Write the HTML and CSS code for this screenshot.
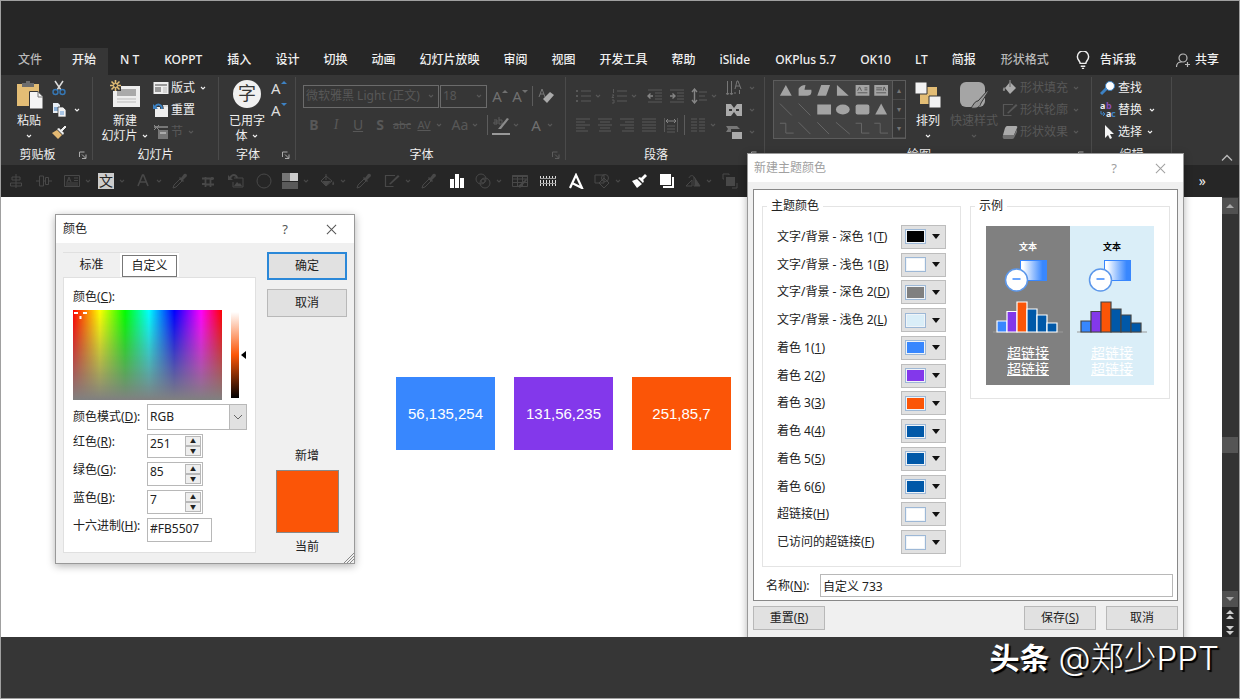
FILE: index.html
```html
<!DOCTYPE html>
<html lang="zh-CN">
<head>
<meta charset="utf-8">
<title>新建主题颜色</title>
<link rel="stylesheet" href="styles.css">
</head>
<body>
<svg class="defs" aria-hidden="true">
  <defs>
    <linearGradient id="blueFade"><stop offset="0.1" stop-color="#fff"/><stop offset="0.85" stop-color="#3887fe"/></linearGradient>
    <symbol id="caret" viewBox="0 0 8 8"><path d="M2 3l2 2 2-2" fill="none" stroke="currentColor" stroke-width="1.1"/></symbol>
    <symbol id="launch" viewBox="0 0 10 10"><path d="M1.5 7V2h5M4 4.500l3.500 3.500M8 4.500V8.500H4" fill="none" stroke="currentColor"/></symbol>
    <symbol id="paste" viewBox="0 0 30 30"><path d="M3 4h22v22H3z" fill="#e3bd75"/><path d="M8 7V3h4V1h4v2h4v4z" fill="#6d6d6d"/><path d="M15.500 11.500H24l5 5V29H15.500z" fill="#f5f5f5" stroke="#363636"/><path d="M24 11.500V17h5" fill="none" stroke="#777"/></symbol>
    <symbol id="cut" viewBox="0 0 16 16"><path d="M4 1l6 9M12 1L6 10" stroke="#ddd" stroke-width="1.500"/><g fill="none" stroke="#3577b5" stroke-width="1.400"><circle cx="4.500" cy="12" r="2.500"/><circle cx="11.500" cy="12" r="2.500"/></g></symbol>
    <symbol id="copy" viewBox="0 0 16 16"><path d="M2 1h5l2 2v8H2z" fill="#e8eef5"/><path d="M3 5h5v4H3z" fill="#8ab0d8"/><path d="M7 5h5l3 3v7H7z" fill="#f2f2f2" stroke="#363636" stroke-width=".7"/><path d="M9 9h4v4H9z" fill="#a7c4e4"/></symbol>
    <symbol id="brush" viewBox="0 0 16 16"><path d="M1 9l5-3 5 5-4 4z" fill="#e3b872"/><path d="M6 5l6 6 1-2-5-5z" fill="#eee"/><path d="M10 6l4-4 1 1-4 4z" fill="#eee" stroke="#eee"/></symbol>
    <symbol id="newslide" viewBox="0 0 30 30"><path d="M3 6h27v21H3z" fill="#eee"/><path d="M7 9h19v7H7z" fill="#aaa"/><path d="M7 19h19M7 22h19" stroke="#bbb"/><path d="M0 0h11v11H0z" fill="#363636"/><g stroke="#e3bd75" stroke-width="1.600"><path d="M5.500 0v11M0 5.500h11M1.500 1.500l8 8M9.500 1.500l-8 8"/></g><circle cx="5.500" cy="5.500" r="2" fill="#363636" stroke="#e3bd75"/></symbol>
    <symbol id="layout" viewBox="0 0 16 16"><path d="M.5 2h15v12H.5z" fill="#eee"/><path d="M2 4h12v2H2zM2 7h6v5H2z" fill="#999"/><path d="M10 8h4M10 10h4M10 12h4" stroke="#bbb"/></symbol>
    <symbol id="reset" viewBox="0 0 16 16"><path d="M2 5h13v10H2z" fill="#eee"/><path d="M9 3h6v2H9z" fill="#ddd"/><path d="M9 7c0-5-5-6-7-2" fill="none" stroke="#363636" stroke-width="3.500"/><path d="M9 7c0-5-5-6-7-2" fill="none" stroke="#3d82c4" stroke-width="1.800"/><path d="M0 2v5h5z" fill="#3d82c4"/></symbol>
    <symbol id="section" viewBox="0 0 16 16"><path d="M1 2h14v2H1zM5 6h10v9H5z" fill="#777"/><path d="M7 8h6v2H7z" fill="#aaa"/><path d="M1 1l5 5M6 1L1 6" stroke="#888"/></symbol>
    <symbol id="find" viewBox="0 0 16 16"><path d="M1 14l6-6" stroke="#3d82c4" stroke-width="3"/><circle cx="10" cy="6" r="4.500" fill="#fff" stroke="#3d82c4"/></symbol>
    <symbol id="replace" viewBox="0 0 16 16"><g font-family="Noto Sans" font-size="9" font-weight="700"><text x="0" y="7" fill="#eee">a</text><text x="6" y="7" fill="#8b50b8">b</text><text x="6" y="15" fill="#eee">a</text><text x="11" y="15" fill="#3d82c4">c</text></g><path d="M1 9v3h3M3 10l2 2-2 2" fill="none" stroke="#3d82c4"/></symbol>
    <symbol id="pointer" viewBox="0 0 16 16"><path d="M5 1v13l3-3 2 4 2-1-2-4h4z" fill="#f5f5f5"/></symbol>
    <symbol id="arrange" viewBox="0 0 30 30"><path d="M14 7h10v10H14zM7 14h10v10H7z" fill="#e3bd75"/><path d="M2 2h12v12H2zM16 16h12v12H16z" fill="#f2f2f2" stroke="#363636"/></symbol>
    <symbol id="quick" viewBox="0 0 30 30"><rect x="1" y="2" width="25" height="25" rx="6" fill="#a5a5a5"/><path d="M29 10L19 21c-3 0-4 3-7 7 6 1 9-1 10-5l7-11z" fill="#999" stroke="#363636"/></symbol>
    <symbol id="fill" viewBox="0 0 16 16"><path d="M8 2l6 6-6 6-5-6z" fill="#aaa"/><path d="M8 0v7" stroke="#777" stroke-width="1.500"/><path d="M2 7c-2 3-1 4 0 4s2-2 0-4" fill="#888"/></symbol>
    <symbol id="outline" viewBox="0 0 16 16"><path d="M11 2.500H1.500v11h8" fill="none" stroke="currentColor" stroke-width="1.200"/><path d="M5 11l9-9 1.500 1.500-9 8z" fill="currentColor"/></symbol>
    <symbol id="pen" viewBox="0 0 16 16"><path d="M1 4h3v4H1V6h3M6 1v7h3V4H6" fill="none" stroke="#5c5c5c"/><path d="M5 13l9-11 2 1L8 13z" fill="#8a8a8a"/></symbol>
    <symbol id="effect" viewBox="0 0 16 16"><path d="M5 2h9q2 0 1 2l-3 7H1l2-7q1-2 2-2z" fill="#aaa"/><path d="M1 11h11l3-6v3l-3 6q-.5 1-2 1H2q-2-1-1-4z" fill="#707070"/></symbol>
    <symbol id="eraser" viewBox="0 0 16 16"><path d="M1 9l3-8 3 8M2 6h4" fill="none" stroke="#777"/><path d="M5 11l7-7 4 3-7 8z" fill="#aaa"/></symbol>
    <symbol id="bul" viewBox="0 0 16 16"><path d="M6 3h10M6 8h10M6 13h10" stroke="currentColor"/><path d="M1 2h2v2H1zM1 7h2v2H1zM1 12h2v2H1z" fill="currentColor"/></symbol>
    <symbol id="num" viewBox="0 0 16 16"><path d="M6 3h10M6 8h10M6 13h10M2.500 1v4M1 7h2l-2 2.500h2M1 12h2v3H1" fill="none" stroke="currentColor"/></symbol>
    <symbol id="outd" viewBox="0 0 16 16"><path d="M1 2h14M8 5h7M8 8h7M8 11h7M1 14h14" stroke="currentColor"/><path d="M6 8H1M3.500 5.500L1 8l2.500 2.500" fill="none" stroke="#858585" stroke-width="1.400"/></symbol>
    <symbol id="ind" viewBox="0 0 16 16"><path d="M1 2h14M8 5h7M8 8h7M8 11h7M1 14h14" stroke="currentColor"/><path d="M1 8h5M3.500 5.500L6 8l-2.500 2.500" fill="none" stroke="#858585" stroke-width="1.400"/></symbol>
    <symbol id="spacing" viewBox="0 0 16 16"><path d="M8 4h8M8 8h6M8 12h8" stroke="currentColor"/><path d="M3.500 2v12M1 4l2.500-3L6 4M1 12l2.500 3L6 12" fill="none" stroke="#858585" stroke-width="1.400"/></symbol>
    <symbol id="al" viewBox="0 0 16 16"><path d="M1 2h14M1 5h9M1 8h14M1 11h9M1 14h12" stroke="currentColor"/></symbol>
    <symbol id="ac" viewBox="0 0 16 16"><path d="M1 2h14M3 5h10M1 8h14M3 11h10M2 14h12" stroke="currentColor"/></symbol>
    <symbol id="ar" viewBox="0 0 16 16"><path d="M1 2h14M6 5h9M1 8h14M6 11h9M3 14h12" stroke="currentColor"/></symbol>
    <symbol id="aj" viewBox="0 0 16 16"><path d="M1 2h14M1 5h14M1 8h14M1 11h14M1 14h14" stroke="currentColor"/></symbol>
    <symbol id="dist" viewBox="0 0 16 16"><path d="M1.500 1v14M14.500 1v14M4 9h8M4 12h8M4 15h8" stroke="currentColor"/><path d="M3 4h10M5 2L3 4l2 2M11 2l2 2-2 2" fill="none" stroke="#858585"/></symbol>
    <symbol id="cols" viewBox="0 0 16 16"><path d="M1 2h6M1 5h6M1 8h6M1 11h6M1 14h6M9 2h6M9 5h6M9 8h6M9 11h6M9 14h6" stroke="currentColor"/></symbol>
    <symbol id="tdir" viewBox="0 0 16 16"><path d="M1.500 1v13M5.500 1v13M9 12v2M9 9l2-8h1l3 8M10 6h4M13.500 10v4M0 13l1.500 2L3 13M4 13l1.500 2L7 13" fill="none" stroke="#777"/></symbol>
    <symbol id="tal" viewBox="0 0 16 16"><path d="M0 2h16v12H0z" fill="#aaa"/><path d="M5 2h6L8 6zM5 14h6l-3-4zM3 7h3v2H3zM10 7h3v2h-3z" fill="#363636"/></symbol>
    <symbol id="smart" viewBox="0 0 16 16"><path d="M0 2h11l3 3H5v3H0l2-3z" fill="#777"/><path d="M6 8h10v7H6z" fill="#aaa"/></symbol>
    <symbol id="bulb" viewBox="0 0 16 16"><path d="M5.500 11c0-2-2.500-3-2.500-6a5 5 0 0110 0c0 3-2.500 4-2.500 6zM6 13.500h4M7 15.500h2" fill="none" stroke="#eee" stroke-width="1.300"/></symbol>
    <symbol id="person" viewBox="0 0 16 16"><circle cx="8" cy="6" r="4" fill="none" stroke="#bbb" stroke-width="1.200"/><path d="M1.500 15c0-3 2-5 5-5M10 12.500h5M12.500 10v5" fill="none" stroke="#bbb" stroke-width="1.200"/></symbol>
    <symbol id="q1" viewBox="0 0 16 16"><path d="M8 1v14M4 4h8v3H4zM2.500 10h11v3h-11z" fill="none" stroke="currentColor"/></symbol>
    <symbol id="q2" viewBox="0 0 16 16"><path d="M0 8h3M7 8h2M13 8h3M3.500 3v10h4V3zM9.500 4.500v7h3v-7z" fill="none" stroke="currentColor"/></symbol>
    <symbol id="q3" viewBox="0 0 16 16"><path d="M.5 2.500h15v11H.5zM10 5h4M10 7.500h4M2 10h12M2 12h12M3 9l2-5 2 5M4 7h2" fill="none" stroke="currentColor"/></symbol>
    <symbol id="qa" viewBox="0 0 16 16"><path d="M3 13L7.500 2h1L13 13M5 9h6" fill="none" stroke="currentColor" stroke-width="1.600"/></symbol>
    <symbol id="dropper" viewBox="0 0 16 16"><path d="M1 15l1-3 6-6 2 2-6 6z" fill="none" stroke="currentColor"/><path d="M7 5l1-1 1 1 3-4q3-1 3 2l-4 4 1 1-1 1z" fill="currentColor"/></symbol>
    <symbol id="crop" viewBox="0 0 16 16"><path d="M5.500 4v7.500H14M2 5.500h8.500V14M12 4v3M10 5.500h4M5.500 11v3M2 11h4" fill="none" stroke="currentColor" stroke-width="1.800"/></symbol>
    <symbol id="picreset" viewBox="0 0 16 16"><path d="M6 5h9v9H5V9" fill="none" stroke="currentColor"/><path d="M6 13l3-4 2 2 1-1 2 3zM0 2v5h5z" fill="currentColor"/><path d="M2 5c2-4 6-4 7 0" fill="none" stroke="currentColor" stroke-width="2"/></symbol>
    <symbol id="ring" viewBox="0 0 16 16"><circle cx="8" cy="8" r="7" fill="none" stroke="currentColor"/></symbol>
    <symbol id="quad" viewBox="0 0 16 16"><path d="M0 0h8v8H0z" fill="#777"/><path d="M8 0h8v8H8z" fill="#ccc"/><path d="M0 9h16v7H0z" fill="#5a5a5a"/></symbol>
    <symbol id="bucket" viewBox="0 0 16 16"><path d="M7 3l6 5-6 5-5-5zM7 1v6" fill="none" stroke="currentColor"/><path d="M3 8h9l-5 5zM14 8c2 3 1 4 0 4s-1-1 0-4" fill="currentColor"/></symbol>
    <symbol id="chart" viewBox="0 0 16 16"><path d="M1 6h4v9H1zM6 1h4v14H6zM11 5h4v10h-4z" fill="#fff"/></symbol>
    <symbol id="venn" viewBox="0 0 16 16"><g fill="none" stroke="currentColor"><circle cx="6" cy="6" r="5"/><circle cx="10" cy="10" r="5"/><circle cx="8" cy="8" r="2"/></g></symbol>
    <symbol id="table" viewBox="0 0 16 16"><path d="M.5 2.500h15v11H.5zM.5 6h15M.5 9.500h15M5.500 3v10M10.500 3v10" fill="none" stroke="currentColor"/><path d="M.5 2h15v2H.5zM6 13l8-7 1 1-7 8z" fill="currentColor"/></symbol>
    <symbol id="guides" viewBox="0 0 16 16"><path d="M3.500 3v10M6.500 3v10M9.500 3v10M12.500 3v10M15.500 3v10M.5 3v10" stroke="#ddd" stroke-dasharray="3 1"/><path d="M0 5.500h16M0 10.500h16" stroke="#999"/></symbol>
    <symbol id="bigA" viewBox="0 0 16 16"><path d="M2 15L8 2l6 13-10-5" fill="none" stroke="#fff" stroke-width="2.200"/></symbol>
    <symbol id="shapes" viewBox="0 0 16 16"><path d="M1 2h9v8H1zM10 5l5 5-5 5-5-5z" fill="none" stroke="currentColor"/><circle cx="11" cy="5" r="3.500" fill="none" stroke="currentColor"/></symbol>
    <symbol id="wbrush" viewBox="0 0 16 16"><path d="M1 8l5-2 5 5-5 4zM7 5l2-1 4 4-1 2zM10 5l4-4 2 2-4 4z" fill="#fff"/></symbol>
    <symbol id="stack" viewBox="0 0 16 16"><path d="M1 1h11v11H1z" fill="#fff"/><path d="M14 4v10H4" fill="none" stroke="#fff" stroke-width="2"/></symbol>
    <symbol id="rot" viewBox="0 0 16 16"><path d="M1 13h6V7zM9 4l6 9H9zM4 5c1-3 4-3 5-1" fill="none" stroke="currentColor"/><path d="M10 5l5 8h-5z" fill="currentColor"/></symbol>
    <symbol id="front" viewBox="0 0 16 16"><path d="M4 4h9v9H4z" fill="currentColor"/><path d="M2 6H1V1h6v1M10 15h5v-5" fill="none" stroke="currentColor"/></symbol>
    <symbol id="preview" viewBox="0 0 70 92">
      <rect x="27.500" y=".5" width="26" height="20" fill="url(#blueFade)" stroke="#3887fe"/>
      <circle cx="23.500" cy="20" r="11" fill="#fff" stroke="#5c97ea" stroke-width="1.500"/><path d="M19.500 19h8" stroke="#3887fe" stroke-width="1.500"/>
      <g stroke="currentColor" stroke-width="1.200"><path d="M0 72h70" stroke="#999"/><path d="M4 61h10v11H4z" fill="#3887fe"/><path d="M14 51.500h10V72H14z" fill="#8338eb"/><path d="M24 42h10v30H24z" fill="#fb5507"/><path d="M34 49h10v23H34z" fill="#0058a8"/><path d="M44 55h10v17H44z" fill="#0058a8"/><path d="M54 63h10v9H54z" fill="#0058a8"/></g>
    </symbol>
  </defs>
</svg>

<div class="app">
  <header class="titlebar"></header>
  <nav class="tabs">
    <button class="tab dim">文件</button><button class="tab active">开始</button><button class="tab latin">N T</button><button class="tab latin">KOPPT</button><button class="tab">插入</button><button class="tab">设计</button><button class="tab">切换</button><button class="tab">动画</button><button class="tab">幻灯片放映</button><button class="tab">审阅</button><button class="tab">视图</button><button class="tab">开发工具</button><button class="tab">帮助</button><button class="tab latin">iSlide</button><button class="tab">OKPlus 5.7</button><button class="tab">OK10</button><button class="tab">LT</button><button class="tab">简报</button><button class="tab dim context">形状格式</button>
    <button class="tab tell"><svg class="i18"><use href="#bulb"/></svg>告诉我</button>
    <button class="tab share"><svg class="i16"><use href="#person"/></svg>共享</button>
  </nav>

  <section class="ribbon">
    <div class="group g-clip">
      <div class="tools">
        <button class="big"><svg class="i30"><use href="#paste"/></svg><span>粘贴</span><svg class="caret"><use href="#caret"/></svg></button>
        <div class="stack">
          <button class="small" aria-label="剪切"><svg class="i16"><use href="#cut"/></svg></button>
          <button class="small" aria-label="复制"><svg class="i16"><use href="#copy"/></svg><svg class="caret wide"><use href="#caret"/></svg></button>
          <button class="small" aria-label="格式刷"><svg class="i16"><use href="#brush"/></svg></button>
        </div>
      </div>
      <div class="caption"><span>剪贴板</span><svg class="launch"><use href="#launch"/></svg></div>
    </div>
    <div class="group g-slide">
      <div class="tools">
        <button class="big"><svg class="i30"><use href="#newslide"/></svg><span>新建</span><span class="line">幻灯片<svg class="caret"><use href="#caret"/></svg></span></button>
        <div class="stack">
          <button class="small"><svg class="i16"><use href="#layout"/></svg>版式<svg class="caret"><use href="#caret"/></svg></button>
          <button class="small"><svg class="i16"><use href="#reset"/></svg>重置</button>
          <button class="small off"><svg class="i16"><use href="#section"/></svg>节<svg class="caret"><use href="#caret"/></svg></button>
        </div>
      </div>
      <div class="caption"><span>幻灯片</span></div>
    </div>
    <div class="group g-used">
      <div class="tools">
        <button class="big"><span class="zi">字</span><span>已用字</span><span class="line">体<svg class="caret"><use href="#caret"/></svg></span></button>
        <div class="stack">
          <button class="small glyph">A<svg class="mark"><path d="M0 5l3-3 3 3z" fill="#3d82c4"/></svg></button>
          <button class="small glyph">A<svg class="mark"><path d="M0 2l3 3 3-3z" fill="#3d82c4"/></svg></button>
        </div>
      </div>
      <div class="caption"><span>字体</span><svg class="launch"><use href="#launch"/></svg></div>
    </div>
    <div class="group g-font off">
      <div class="tools rows">
        <div class="row">
          <span class="pick family"><select aria-label="字体"><option>微软雅黑 Light (正文)</option></select><svg class="caret"><use href="#caret"/></svg></span>
          <span class="pick size"><select aria-label="字号"><option>18</option></select><svg class="caret"><use href="#caret"/></svg></span>
          <button class="slot up">A<svg class="mark"><path d="M0 5l3-3 3 3z" fill="currentColor"/></svg></button>
          <button class="slot up">A<svg class="mark"><path d="M0 2l3 3 3-3z" fill="currentColor"/></svg></button>
          <i class="bar"></i>
          <button class="slot" aria-label="清除格式"><svg class="i16"><use href="#eraser"/></svg></button>
        </div>
        <div class="row">
          <button class="slot"><b>B</b></button><button class="slot ital"><i>I</i></button><button class="slot"><u>U</u></button><button class="slot"><b>S</b></button><button class="slot tiny"><s>abc</s></button><button class="slot tiny"><u>AV</u></button><svg class="caret wide"><use href="#caret"/></svg><button class="slot">Aa</button><svg class="caret wide"><use href="#caret"/></svg><i class="bar"></i><button class="slot hl" aria-label="突出显示"><svg class="i16"><use href="#pen"/></svg></button><svg class="caret wide"><use href="#caret"/></svg><button class="slot up">A</button><svg class="caret wide"><use href="#caret"/></svg>
        </div>
      </div>
      <div class="caption"><span>字体</span><svg class="launch"><use href="#launch"/></svg></div>
    </div>
    <div class="group g-para off">
      <div class="tools">
        <div class="rows">
          <div class="row"><button class="slot"><svg class="i16"><use href="#bul"/></svg></button><svg class="caret wide"><use href="#caret"/></svg><button class="slot"><svg class="i16"><use href="#num"/></svg></button><svg class="caret wide"><use href="#caret"/></svg><button class="slot"><svg class="i16"><use href="#outd"/></svg></button><button class="slot"><svg class="i16"><use href="#ind"/></svg></button><button class="slot"><svg class="i16"><use href="#spacing"/></svg></button><svg class="caret wide"><use href="#caret"/></svg></div>
          <div class="row"><button class="slot"><svg class="i16"><use href="#al"/></svg></button><button class="slot"><svg class="i16"><use href="#ac"/></svg></button><button class="slot"><svg class="i16"><use href="#ar"/></svg></button><button class="slot"><svg class="i16"><use href="#aj"/></svg></button><button class="slot"><svg class="i16"><use href="#dist"/></svg></button><i class="bar"></i><button class="slot"><svg class="i16"><use href="#cols"/></svg></button><svg class="caret wide"><use href="#caret"/></svg></div>
        </div>
        <div class="stack">
          <button class="small"><svg class="i16"><use href="#tdir"/></svg><svg class="caret wide"><use href="#caret"/></svg></button>
          <button class="small"><svg class="i16"><use href="#tal"/></svg><svg class="caret wide"><use href="#caret"/></svg></button>
          <button class="small"><svg class="i16"><use href="#smart"/></svg><svg class="caret wide"><use href="#caret"/></svg></button>
        </div>
      </div>
      <div class="caption"><span>段落</span><svg class="launch"><use href="#launch"/></svg></div>
    </div>
    <div class="group g-draw">
      <div class="tools">
        <div class="gallery">
          <svg class="shapes" viewBox="0 0 118 58">
            <g fill="#a3a3a3"><path d="M11 4l6 11H5zM24 15V8q2-4 7-4l-1 5h7q1 6-4 6zM47 4h9l-4 11h-9zM63 4l12 11H63zM82 4h14v11H82zM101 4h14v11h-14zM43 24h14v10H43z"/><ellipse cx="69" cy="29" rx="7" ry="5"/><rect x="82" y="24" width="14" height="10" rx="2"/><path d="M108 23l6 11h-12z"/></g>
            <path d="M91 7h3M91 9h3M84 12h10M103 7h6M103 9h6M103 12h10M84 10l2-4 2 4M110 10l1-4 2 4" fill="none" stroke="#5a5a5a"/>
            <path d="M5 23l12 12M24 23l12 12M5 43h6v10h8M24 42l12 12M43 42l12 12M62 42l14 12M82 43h6v10h8M101 43h6v10h8" fill="none" stroke="#666"/>
          </svg>
          <div class="gscroll"><button aria-label="上">▴</button><button aria-label="下">▾</button><button aria-label="更多">▾</button></div>
        </div>
        <button class="big"><svg class="i30"><use href="#arrange"/></svg><span>排列</span><svg class="caret"><use href="#caret"/></svg></button>
        <button class="big off"><svg class="i30"><use href="#quick"/></svg><span>快速样式</span><svg class="caret"><use href="#caret"/></svg></button>
        <div class="stack off">
          <button class="small"><svg class="i16"><use href="#fill"/></svg>形状填充<svg class="caret"><use href="#caret"/></svg></button>
          <button class="small"><svg class="i16"><use href="#outline"/></svg>形状轮廓<svg class="caret"><use href="#caret"/></svg></button>
          <button class="small"><svg class="i16"><use href="#effect"/></svg>形状效果<svg class="caret"><use href="#caret"/></svg></button>
        </div>
      </div>
      <div class="caption"><span>绘图</span><svg class="launch"><use href="#launch"/></svg></div>
    </div>
    <div class="group g-edit">
      <div class="tools">
        <div class="stack">
          <button class="small"><svg class="i16"><use href="#find"/></svg>查找</button>
          <button class="small"><svg class="i16"><use href="#replace"/></svg>替换<svg class="caret wide"><use href="#caret"/></svg></button>
          <button class="small"><svg class="i16"><use href="#pointer"/></svg>选择<svg class="caret"><use href="#caret"/></svg></button>
        </div>
      </div>
      <div class="caption"><span>编辑</span></div>
    </div>
    <button class="collapse" aria-label="折叠功能区"><svg viewBox="0 0 12 8"><path d="M1 6.500l5-5 5 5" fill="none" stroke="#bbb" stroke-width="1.300"/></svg></button>
  </section>

  <div class="qat">
    <button class="q"><svg><use href="#q1"/></svg></button>
    <button class="q"><svg><use href="#q2"/></svg></button>
    <button class="q mid"><svg><use href="#q3"/></svg><svg class="caret"><use href="#caret"/></svg></button>
    <button class="q drop"><span class="wen">文</span><svg class="caret"><use href="#caret"/></svg></button>
    <button class="q drop"><svg><use href="#qa"/></svg><svg class="caret"><use href="#caret"/></svg></button>
    <button class="q"><svg><use href="#dropper"/></svg></button>
    <button class="q"><svg><use href="#crop"/></svg></button>
    <button class="q"><svg><use href="#picreset"/></svg></button>
    <button class="q near"><svg><use href="#ring"/></svg></button>
    <button class="q drop"><svg><use href="#quad"/></svg><svg class="caret"><use href="#caret"/></svg></button>
    <button class="q drop"><svg><use href="#bucket"/></svg><svg class="caret"><use href="#caret"/></svg></button>
    <button class="q"><svg><use href="#dropper"/></svg></button>
    <button class="q drop"><svg><use href="#outline"/></svg><svg class="caret"><use href="#caret"/></svg></button>
    <button class="q"><svg><use href="#dropper"/></svg></button>
    <button class="q near"><svg><use href="#chart"/></svg></button>
    <button class="q drop"><svg><use href="#venn"/></svg><svg class="caret"><use href="#caret"/></svg></button>
    <button class="q"><svg><use href="#table"/></svg></button>
    <button class="q"><svg><use href="#guides"/></svg></button>
    <button class="q near"><svg><use href="#bigA"/></svg></button>
    <button class="q drop"><svg><use href="#shapes"/></svg><svg class="caret"><use href="#caret"/></svg></button>
    <button class="q"><svg><use href="#wbrush"/></svg></button>
    <button class="q near"><svg><use href="#stack"/></svg></button>
    <button class="q drop"><svg><use href="#rot"/></svg><svg class="caret"><use href="#caret"/></svg></button>
    <button class="q"><svg><use href="#front"/></svg></button>
    <button class="more">»</button>
  </div>

  <main class="work">
    <div class="canvas">
      <div class="chip blue">56,135,254</div>
      <div class="chip purple">131,56,235</div>
      <div class="chip orange">251,85,7</div>
    </div>
    <div class="vscroll">
      <button aria-label="向上滚动"><svg viewBox="0 0 16 16"><path d="M4 10l4-4 4 4z" fill="#aaa"/></svg></button>
      <div class="track"><div class="thumb"></div></div>
      <button aria-label="向下滚动"><svg viewBox="0 0 16 16"><path d="M4 6l4 4 4-4z" fill="#aaa"/></svg></button>
      <button class="page" aria-label="上一张"><svg viewBox="0 0 16 16"><path d="M4 7l4-4 4 4zM4 12l4-4 4 4z" fill="#ccc"/></svg></button>
      <button class="page" aria-label="下一张"><svg viewBox="0 0 16 16"><path d="M4 4l4 4 4-4zM4 9l4 4 4-4z" fill="#ccc"/></svg></button>
    </div>
  </main>

  <section class="dialog colors" role="dialog" aria-label="颜色">
    <header><span>颜色</span><button>?</button><button aria-label="关闭"><svg viewBox="0 0 12 12"><path d="M1 1l10 10M11 1L1 11" stroke="currentColor" stroke-width="1.100"/></svg></button></header>
    <div class="cbody">
      <div class="left">
        <div class="ctabs"><button>标准</button><button class="on"><span>自定义</span></button></div>
        <div class="cpage">
          <p>颜色(<u>C</u>):</p>
          <div class="pickers">
            <div class="spectrum"><svg viewBox="0 0 14 10"><path d="M1 3h4M10 3h4M7.500 6v3" stroke="#fff" stroke-width="2"/></svg></div>
            <div class="lum"></div>
            <svg class="arrow" viewBox="0 0 6 8"><path d="M0 4l5-4v8z"/></svg>
          </div>
          <form class="fields">
            <label for="mode">颜色模式(<u>D</u>):</label>
            <span class="combo"><select id="mode"><option>RGB</option></select><svg viewBox="0 0 16 24"><path d="M4 10l4 4 4-4" fill="none" stroke="#666"/></svg></span>
            <label for="r">红色(<u>R</u>):</label>
            <span class="spin"><input id="r" value="251"><span><button type="button">▲</button><button type="button">▼</button></span></span>
            <label for="g">绿色(<u>G</u>):</label>
            <span class="spin"><input id="g" value="85"><span><button type="button">▲</button><button type="button">▼</button></span></span>
            <label for="b">蓝色(<u>B</u>):</label>
            <span class="spin"><input id="b" value="7"><span><button type="button">▲</button><button type="button">▼</button></span></span>
            <label for="hex">十六进制(<u>H</u>):</label>
            <input id="hex" class="hex" value="#FB5507">
          </form>
        </div>
      </div>
      <div class="right">
        <button class="btn primary">确定</button>
        <button class="btn">取消</button>
        <div class="compare"><span>新增</span><div class="swatch"></div><span>当前</span></div>
      </div>
    </div>
    <svg class="grip" viewBox="0 0 10 10"><path d="M0 10L10 0M3 10l7-7M6 10l4-4" stroke="#888"/></svg>
  </section>

  <section class="dialog theme" role="dialog" aria-label="新建主题颜色">
    <header><span>新建主题颜色</span><button>?</button><button aria-label="关闭"><svg viewBox="0 0 12 12"><path d="M1 1l10 10M11 1L1 11" stroke="currentColor" stroke-width="1.100"/></svg></button></header>
    <div class="tbody">
      <div class="tpage">
        <div class="sets">
          <fieldset class="list">
            <legend>主题颜色</legend>
            <div class="items">
              <label for="c1">文字/背景 - 深色 1(<u>T</u>)</label><button id="c1" class="cc"><i class="black"></i></button>
              <label for="c2">文字/背景 - 浅色 1(<u>B</u>)</label><button id="c2" class="cc"><i class="white"></i></button>
              <label for="c3">文字/背景 - 深色 2(<u>D</u>)</label><button id="c3" class="cc"><i class="gray"></i></button>
              <label for="c4">文字/背景 - 浅色 2(<u>L</u>)</label><button id="c4" class="cc"><i class="pale"></i></button>
              <label for="c5">着色 1(<u>1</u>)</label><button id="c5" class="cc"><i class="blue"></i></button>
              <label for="c6">着色 2(<u>2</u>)</label><button id="c6" class="cc"><i class="purple"></i></button>
              <label for="c7">着色 3(<u>3</u>)</label><button id="c7" class="cc"><i class="orange"></i></button>
              <label for="c8">着色 4(<u>4</u>)</label><button id="c8" class="cc"><i class="navy"></i></button>
              <label for="c9">着色 5(<u>5</u>)</label><button id="c9" class="cc"><i class="navy"></i></button>
              <label for="c10">着色 6(<u>6</u>)</label><button id="c10" class="cc"><i class="navy"></i></button>
              <label for="c11">超链接(<u>H</u>)</label><button id="c11" class="cc"><i class="white"></i></button>
              <label for="c12">已访问的超链接(<u>F</u>)</label><button id="c12" class="cc"><i class="white"></i></button>
            </div>
          </fieldset>
          <fieldset class="sample">
            <legend>示例</legend>
            <div class="halves">
              <div class="half dark"><b>文本</b><svg><use href="#preview"/></svg><a href="#">超链接</a><a href="#">超链接</a></div>
              <div class="half light"><b>文本</b><svg><use href="#preview"/></svg><a href="#">超链接</a><a href="#">超链接</a></div>
            </div>
          </fieldset>
        </div>
        <div class="name"><label for="nm">名称(<u>N</u>):</label><input id="nm" value="自定义 733"></div>
      </div>
      <div class="actions"><button class="btn">重置(<u>R</u>)</button><button class="btn push">保存(<u>S</u>)</button><button class="btn">取消</button></div>
    </div>
  </section>
</div>
<footer class="credit"><b>头条</b><span>@郑少PPT</span></footer>
</body>
</html>
```

FILE: styles.css
```css
* { box-sizing: border-box; }
body {
  margin: 0;
  min-height: 100vh;
  display: flex;
  flex-direction: column;
  border: 1px solid #a0a0a0;
  background: #363636;
  color: #f0f0f0;
  font: 12px/16px "Noto Sans", "Noto Sans CJK SC", sans-serif;
}
button, input, select { font: inherit; color: inherit; margin: 0; border-radius: 0; }
button { padding: 0; border: 0; background: none; }
select { appearance: none; border: 0; background: none; outline: 0; }
svg { display: block; flex: none; }
p { margin: 0; }
.defs { position: absolute; width: 0; height: 0; }
.i16 { width: 16px; height: 16px; }
.i18 { width: 18px; height: 18px; }
.i30 { width: 30px; height: 30px; }
.caret { width: 8px; height: 8px; }
.off { color: #585858; }

.app { position: relative; flex: 1; display: flex; flex-direction: column; overflow: hidden; }
.titlebar { height: 47px; background: #262626; }

.tabs { display: flex; height: 27px; background: #262626; padding-left: 5px; }
.tab { padding: 0 12px 4px; white-space: nowrap; height: 27px; font-weight: 500; }
.tab.latin { padding-right: 13px; }
.tab.dim { color: #b8b8b8; }
.tab.active { background: #363636; margin-left: 6px; }
.tab.context { padding-left: 13px; padding-right: 13px; }
.tell, .share { display: flex; align-items: center; gap: 8px; }
.share { margin-left: auto; gap: 4px; padding-right: 20px; }

.ribbon { display: flex; height: 90px; background: #363636; padding-top: 2px; }
.group { display: flex; flex-direction: column; border-right: 1px solid #4a4a4a; flex: none; height: 83px; }
.tools { display: flex; flex: none; height: 66px; padding-left: 8px; }
.caption { display: flex; flex: none; align-items: center; margin-top: 2px; line-height: 20px; color: #f0f0f0; }
.caption span { flex: 1; text-align: center; }
.launch { width: 10px; height: 10px; margin-right: 4px; margin-left: 4px; color: #aaa; }
.g-font .launch { color: #5c5c5c; }
.g-clip { width: 92px; }
.g-slide { width: 126px; }
.g-used { width: 77px; }
.g-font { width: 270px; }
.g-para { width: 199px; }
.g-draw { width: 327px; }
.g-edit { width: 80px; }
.big { display: flex; flex-direction: column; align-items: center; padding-top: 3px; line-height: 15px; white-space: nowrap; width: 40px; }
.big > svg:first-child { margin-bottom: 3px; }
.big > .caret { margin-top: 4px; }
.line { display: flex; align-items: center; gap: 3px; }
.stack { display: flex; flex-direction: column; }
.small { display: flex; align-items: center; gap: 2px; height: 22px; white-space: nowrap; }
.small .caret { margin-left: 2px; }
.small .caret.wide { margin-left: 4px; }
.g-clip .stack { margin-left: 2px; }
.g-slide .big { width: 48px; }
.g-slide .stack { margin-left: 4px; }
.g-used .big { width: 40px; margin-right: 4px; }
.zi { width: 28px; height: 28px; margin-bottom: 5px; border-radius: 50%; background: #f0f0f0; color: #363636; font-size: 18px; line-height: 26px; text-align: center; }
.glyph { font-size: 15px; color: #ddd; gap: 0; }
.mark { width: 6px; height: 6px; align-self: flex-start; margin-top: 2px; }
.rows { display: flex; flex-direction: column; gap: 8px; padding-top: 8px; }
.g-font .tools { padding-left: 7px; }
.g-para .tools { padding-left: 6px; }
.row { display: flex; align-items: center; height: 22px; }
.row + .row { height: 20px; }
.row .wide { width: 14px; padding-right: 6px; }
.slot { display: flex; justify-content: center; align-items: center; width: 22px; height: 20px; font-size: 14px; }
.slot.up { width: 20px; font-size: 15px; color: #707070; }
.slot.tiny { font-size: 11px; }
.slot.hl { border-bottom: 2px solid #999; width: 18px; margin: 0 2px; color: #858585; }
.ital { font-family: "Liberation Serif", serif; }
.bar { width: 1px; height: 20px; margin: 0 2px; background: #5c5c5c; }
.pick { display: flex; align-items: center; height: 23px; border: 1px solid #6b6b6b; padding-right: 3px; margin-right: 1px; }
.pick select { flex: 1; min-width: 0; padding: 0 2px; }
.family { width: 136px; }
.size { width: 47px; margin-right: 3px; }
.g-para .rows { width: 154px; }
.gallery { display: flex; width: 133px; height: 59px; margin-top: 3px; border: 1px solid #5c5c5c; background: #424242; }
.shapes { width: 118px; height: 57px; }
.gscroll { flex: 1; display: flex; flex-direction: column; border-left: 1px solid #5c5c5c; background: #363636; }
.gscroll button { flex: 1; font-size: 8px; line-height: 16px; color: #777; border-bottom: 1px solid #4a4a4a; }
.g-draw .big { margin-left: 2px; }
.g-draw .big.off { width: 48px; }
.g-draw .stack { margin-left: 4px; }
.collapse { margin-left: auto; align-self: flex-end; padding: 0 6px 3px; }
.collapse svg { width: 12px; height: 8px; }

.qat { display: flex; align-items: center; height: 32px; background: #262626; padding-left: 7px; color: #484848; }
.q { display: flex; align-items: center; gap: 4px; width: 28px; flex: none; }
.q svg { width: 16px; height: 16px; }
.q .caret { width: 8px; height: 8px; }
.q.drop { width: 37px; }
.q.mid { width: 34px; }
.q.near { width: 26px; }
.wen { width: 16px; height: 16px; background: #ccc; color: #262626; line-height: 15px; font-size: 14px; text-align: center; }
.more { margin-left: auto; padding-right: 33px; color: #eee; font-size: 14px; }

.work { flex: 1; display: flex; }
.canvas { flex: 1; background: #fff; display: flex; align-items: flex-start; gap: 19px; padding: 180px 0 0 395px; }
.chip { width: 99px; line-height: 73px; text-align: center; color: #fff; font-size: 15px; font-family: "Liberation Sans", sans-serif; }
.blue { background: #3887fe; }
.purple { background: #8338eb; }
.orange { background: #fb5507; }
.black { background: #000; }
.white { background: #fff; }
.gray { background: #808080; }
.pale { background: #daeef8; }
.navy { background: #0058a8; }
.vscroll { width: 17px; display: flex; flex-direction: column; background: #333; padding: 1px 1px 0 0; }
.vscroll button { height: 16px; background: #505050; }
.vscroll .page { background: #262626; height: 15px; }
.track { flex: 1; display: flex; flex-direction: column; padding-top: 223px; }
.thumb { height: 16px; background: #555; }

.dialog { position: absolute; background: #f0f0f0; color: #222; border: 1px solid #999; box-shadow: 0 2px 8px rgba(0, 0, 0, .3); display: flex; flex-direction: column; }
.dialog header { display: flex; align-items: center; height: 28px; background: #fff; padding-left: 7px; flex: none; }
.dialog header span { flex: 1; }
.dialog header button { width: 46px; display: flex; justify-content: center; font-size: 13px; color: #555; }
.dialog header svg { width: 11px; height: 11px; }
.btn { border: 1px solid #b8b8b8; background: #e1e1e1; }

.colors { left: 54px; top: 213px; width: 300px; height: 350px; }
.cbody { display: flex; flex: 1; padding: 9px 7px 10px; gap: 11px; }
.left { width: 193px; display: flex; flex-direction: column; }
.ctabs { display: flex; height: 25px; }
.ctabs button { width: 57px; border-top: 1px solid #e0e0e0; }
.ctabs .on { width: 59px; background: #fff; padding: 2px; }
.ctabs .on span { display: block; border: 1px solid #777; line-height: 20px; }
.cpage { flex: 1; background: #fff; border: 1px solid #e0e0e0; padding: 11px 8px 0 9px; }
.pickers { display: flex; align-items: center; margin-top: 5px; height: 90px; }
.spectrum { width: 150px; height: 90px; background: linear-gradient(rgba(128, 128, 128, 0), #808080), linear-gradient(90deg, #f00, #ff0 18%, #0f0 35%, #0ff 51%, #00f 68%, #f0f 86%, #f00); }
.spectrum svg { width: 14px; height: 10px; }
.lum { width: 8px; height: 86px; margin-left: 9px; background: linear-gradient(#fff, #fb5507 50%, #000); }
.arrow { width: 6px; height: 8px; margin-left: 2px; }
.fields { display: grid; grid-template-columns: 74px auto; row-gap: 4px; padding-top: 4px; justify-items: start; }
.fields label { white-space: nowrap; line-height: 16px; }
.combo { display: flex; width: 100px; height: 26px; border: 1px solid #b8b8b8; }
.combo select { flex: 1; min-width: 0; padding: 0 2px; }
.combo svg { width: 17px; height: 24px; background: #e1e1e1; border-left: 1px solid #b8b8b8; }
.fields label:first-child { line-height: 26px; }
.spin { display: flex; width: 56px; height: 24px; border: 1px solid #b8b8b8; padding: 1px; }
.spin input { width: 36px; border: 0; padding: 0 1px 4px; }
.spin > span { flex: 1; display: flex; flex-direction: column; }
.spin button { flex: 1; font-size: 6px; line-height: 8px; background: #eee; border: 1px solid #b8b8b8; }
.hex { width: 65px; height: 24px; border: 1px solid #b8b8b8; padding: 0 2px 4px; }
.right { flex: 1; display: flex; flex-direction: column; gap: 9px; }
.right .btn { height: 28px; }
.right .primary { border: 2px solid #2b88d8; }
.compare { margin-top: auto; display: flex; flex-direction: column; align-items: center; gap: 6px; margin-bottom: -2px; }
.swatch { width: 63px; height: 63px; background: #fb5507; border: 1px solid #888; }
.grip { position: absolute; right: 0; bottom: 0; width: 10px; height: 10px; }

.theme { left: 746px; top: 152px; width: 437px; height: 500px; }
.theme header { color: #a0a0a0; padding-left: 6px; }
.theme header button { color: #a0a0a0; }
.tbody { padding: 7px 5px 0; }
.tpage { background: #fff; border: 1px solid #888; height: 412px; padding: 8px 4px 3px 8px; display: flex; flex-direction: column; }
.sets { display: flex; gap: 9px; align-items: flex-start; }
fieldset { margin: 0; min-width: 0; border: 1px solid #e4e4e4; padding: 0; }
legend { margin-left: 4px; padding: 0 4px; }
.list { width: 199px; }
.items { display: grid; grid-template-columns: 1fr 45px; grid-template-rows: repeat(12, 1fr); height: 333px; margin: 9px 14px 10px; align-items: center; white-space: nowrap; }
.cc { height: 24px; display: flex; align-items: center; border: 1px solid #bdbdbd; background: #e1e1e1; padding-left: 3px; }
.cc i { width: 21px; height: 15px; border: 1px solid #9db8d6; box-shadow: inset 0 0 0 1px #f0f4f8; }
.cc::after { content: ""; margin-left: 6px; border: 4px solid transparent; border-top: 5px solid #111; border-bottom: 0; }
.sample { width: 200px; }
.halves { display: flex; margin: 12px 15px 13px; }
.half { flex: 1; height: 159px; display: flex; flex-direction: column; align-items: center; color: #fff; padding-top: 13px; }
.half b { font-size: 9px; }
.half svg { width: 70px; height: 92px; overflow: visible; margin-top: 5px; margin-bottom: -7px; }
.half a { color: #fff; font-size: 14px; line-height: 16px; }
.dark { background: #808080; }
.light { background: #daeef8; }
.light b { color: #000; }
.light svg { color: #444; }
.name { display: flex; align-items: center; margin-top: auto; padding-left: 4px; }
.name label { width: 54px; }
.name input { flex: 1; height: 23px; border: 1px solid #b8b8b8; padding: 0 2px; }
.actions { display: flex; gap: 10px; padding-top: 5px; }
.actions .btn { width: 72px; height: 24px; }
.push { margin-left: auto; }

.credit { position: relative; display: flex; justify-content: flex-end; align-items: center; gap: 9px; height: 61px; padding: 0 20px 20px 0; background: #363636; color: #fff; font: 33px/40px Inter, "Noto Sans CJK SC", sans-serif; text-shadow: 2px 2px 1px #000; }
.credit b { font-size: 30px; }
.credit span { font-weight: 300; }
```
